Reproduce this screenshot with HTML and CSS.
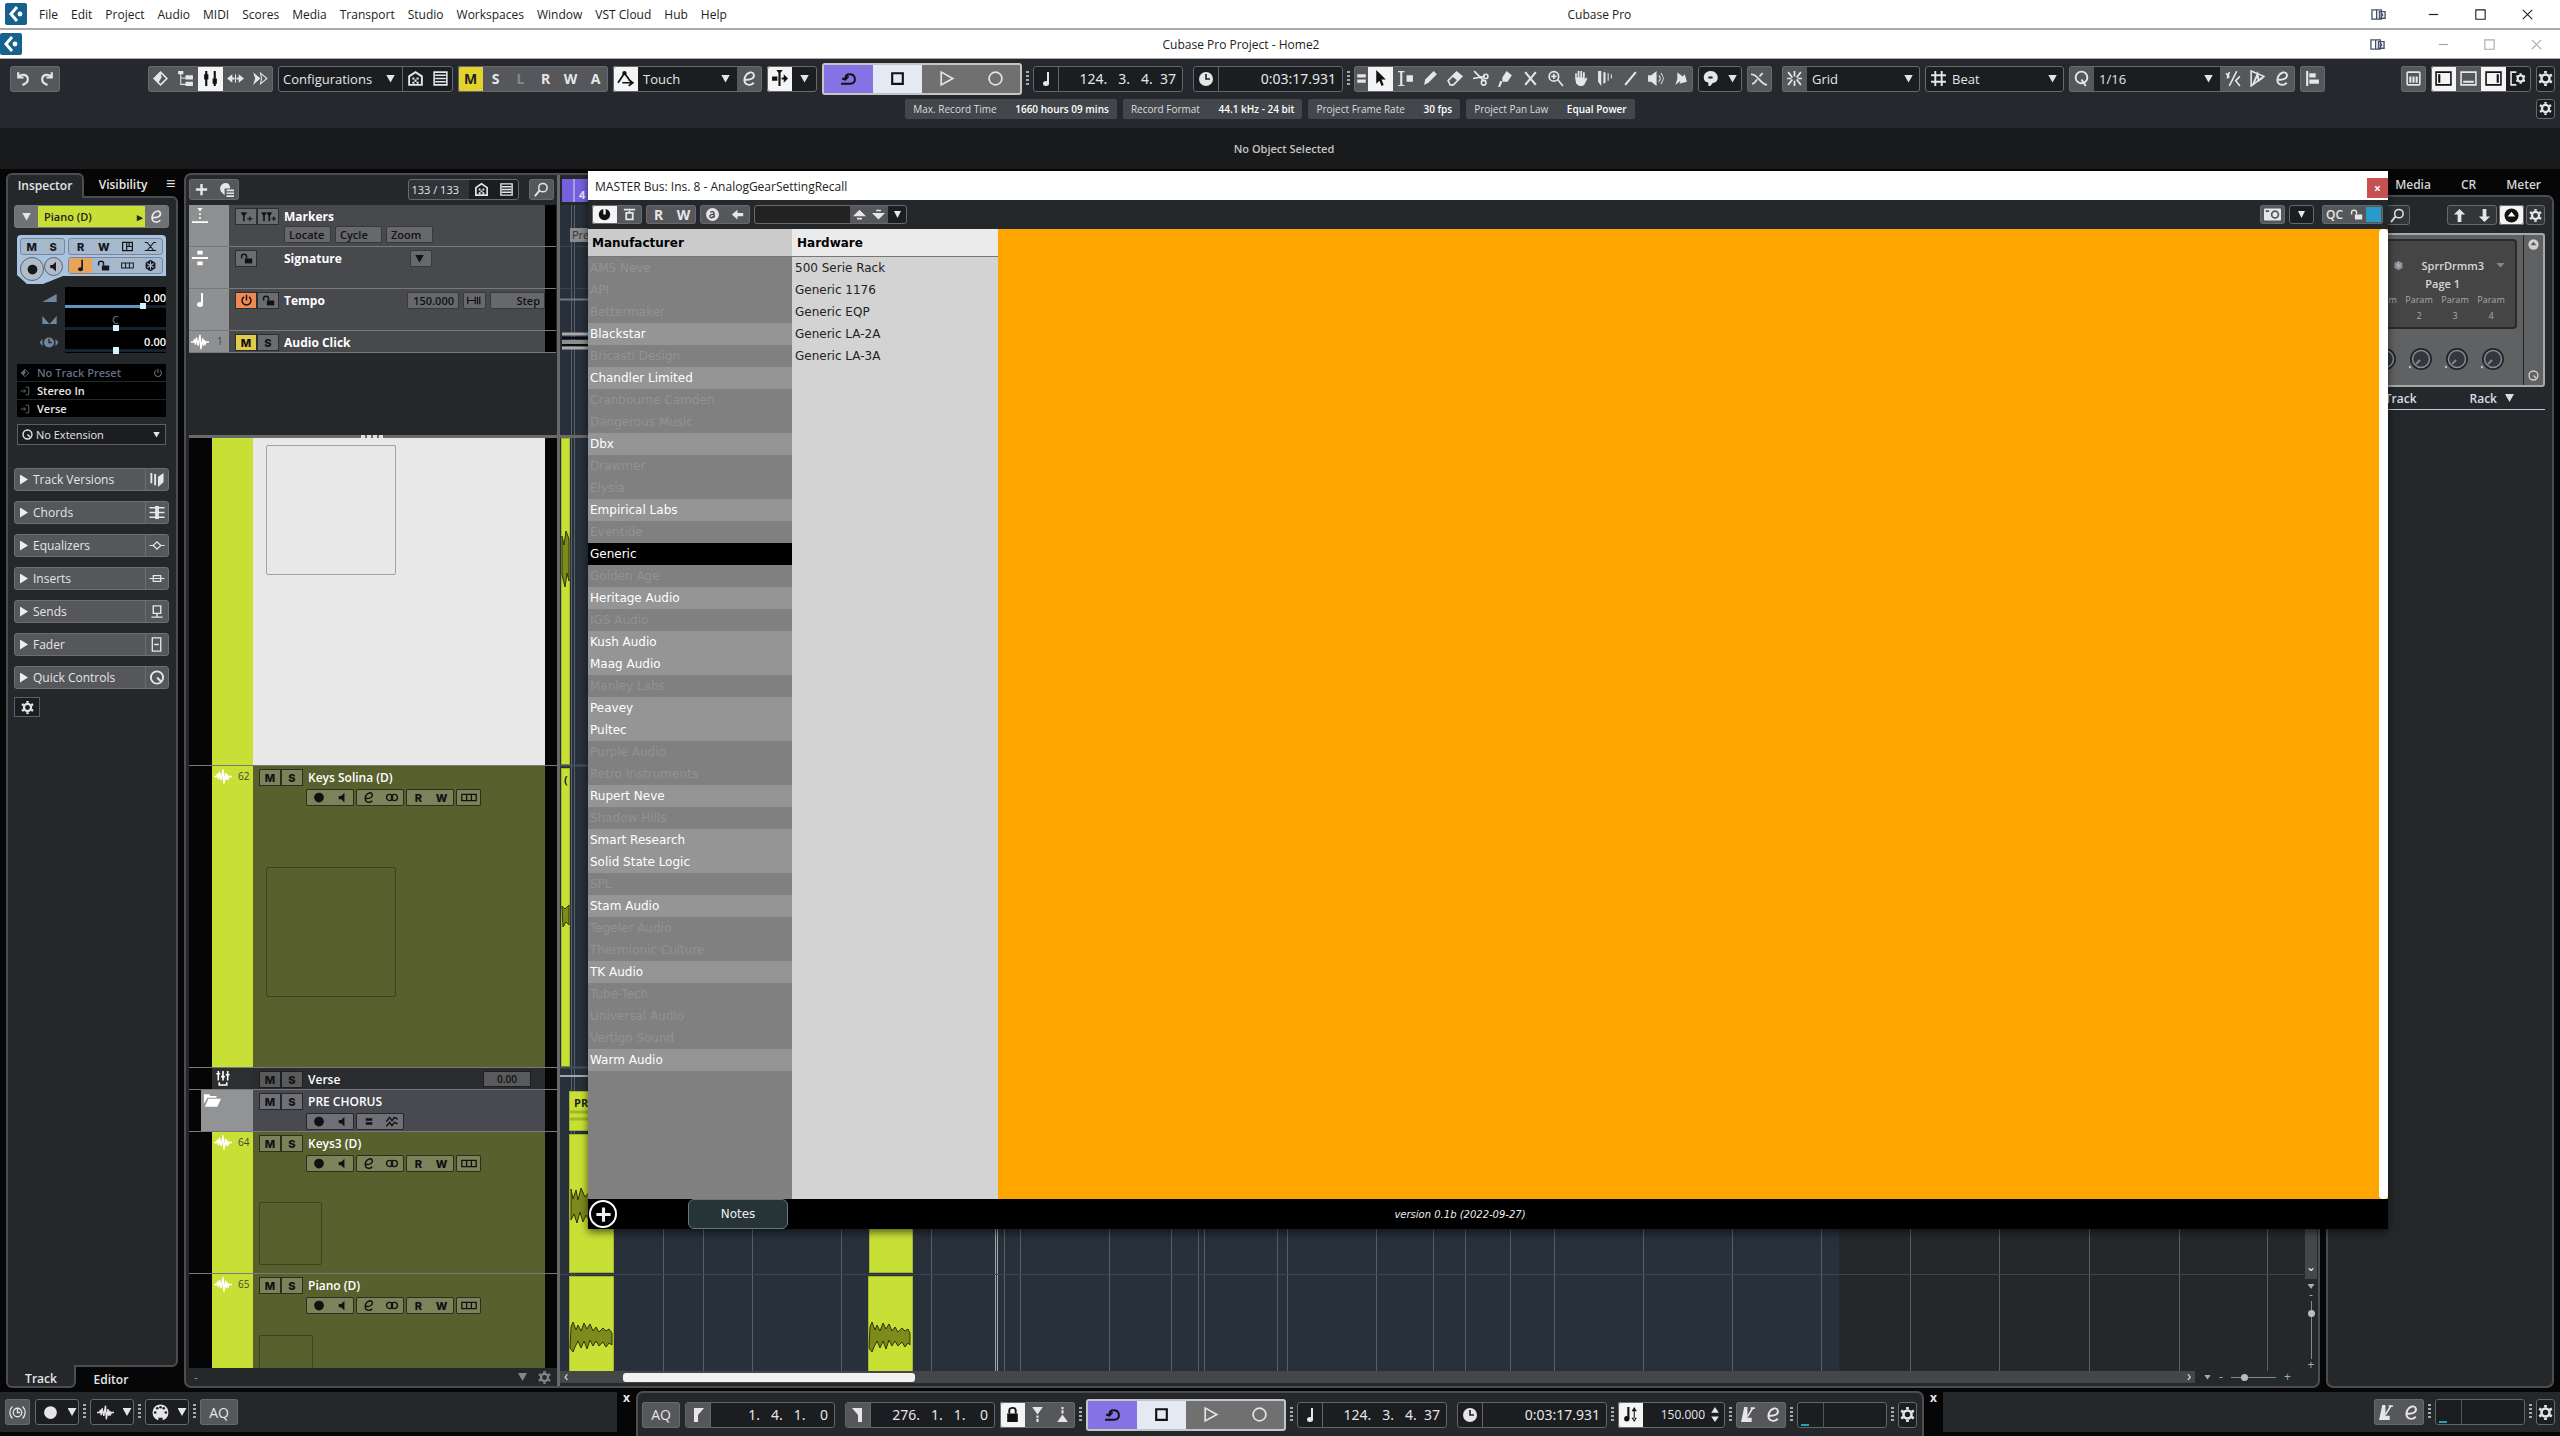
FILE: index.html
```html
<!DOCTYPE html>
<html lang="en">

<head>
    <meta charset="UTF-8">
    <meta name="viewport" content="width=device-width, initial-scale=1.0">
    <title>Cubase Pro Project - Home2</title>
    <link rel="stylesheet" href="styles.css">
</head>

<body>
    <!-- icon sprite -->
    <svg class="sprite" aria-hidden="true">
        <symbol id="logo" viewBox="0 0 22 22"><rect width="22" height="22" rx="2" fill="#17618f"/><path d="M12 4 6 11l6 7" fill="none" stroke="#fff" stroke-width="3"/><circle cx="15" cy="11" r="2.4" fill="#fff"/></symbol>
        <symbol id="undo" viewBox="0 0 16 16"><path d="M4 2v5h5M4 7c3-4 9-3 9 2 0 3-2 4-5 5" fill="none" stroke="currentColor" stroke-width="2"/></symbol>
        <symbol id="redo" viewBox="0 0 16 16"><path d="M12 2v5H7M12 7C9 3 3 4 3 9c0 3 2 4 5 5" fill="none" stroke="currentColor" stroke-width="2"/></symbol>
        <symbol id="diamond" viewBox="0 0 16 16"><path d="M8 2 14 8l-6 6-6-6z" fill="none" stroke="currentColor" stroke-width="1.5"/><path d="M8 2 2 8l4 4 3-5z" fill="currentColor"/></symbol>
        <symbol id="tree" viewBox="0 0 16 16"><path d="M1 1h5v3H1zM8 5h7v4H8zM8 11h7v4H8zM3 4h1v9h4v1H3zM4 7h4v1H4z" fill="currentColor"/></symbol>
        <symbol id="faders" viewBox="0 0 16 16"><path d="M3 1h2v3h1v5H5v6H3V9H2V4h1zM11 1h2v7h1v5h-1v2h-2v-2h-1V8h1z" fill="currentColor"/></symbol>
        <symbol id="lr" viewBox="0 0 16 16"><path d="M0 8l5-4v3h2v2H5v3zM16 8l-5-4v3H9v2h2v3zM7.500 4h1v8h-1z" fill="currentColor"/></symbol>
        <symbol id="ff" viewBox="0 0 16 16"><path d="M1 2l7 6-7 6 2-6z" fill="currentColor"/><path d="M8 3l6 5-6 5 1-5z" fill="none" stroke="currentColor"/></symbol>
        <symbol id="house" viewBox="0 0 16 16"><path d="M2 14V6l6-4 6 4v8z" fill="none" stroke="currentColor" stroke-width="1.800"/><path d="M5 7h2v2H5zM9 7h2v2H9zM7 9h2v2H7zM5 11h2v2H5zM9 11h2v2H9z" fill="currentColor"/></symbol>
        <symbol id="lines" viewBox="0 0 16 16"><path d="M2 2h12v12H2zM3 5h10M3 8h10M3 11h10" fill="none" stroke="currentColor" stroke-width="1.500"/></symbol>
        <symbol id="auto" viewBox="0 0 16 16"><path d="M1 12 7 3l6 8M5 12h9M11 9l4 3-4 3" fill="none" stroke="currentColor" stroke-width="1.600"/><circle cx="7" cy="3" r="2" fill="currentColor"/></symbol>
        <symbol id="edit" viewBox="0 0 16 16"><path d="M3 9c7 1 10-2 9-5-1-3-6-2-8 2-2 5 0 8 4 8 2 0 3-1 4-2" fill="none" stroke="currentColor" stroke-width="1.800"/></symbol>
        <symbol id="follow" viewBox="0 0 16 16"><path d="M1 6h5v4H1zM7 1h2v14H7zM5 0h6L8 4zM10 7h2V4l4 4-4 4V9h-2z" fill="currentColor"/></symbol>
        <symbol id="cycle" viewBox="0 0 16 16"><path d="M1 13h9c6-1 5-9-1-9-3 0-4 2-4 4M2 8l3 1 3-3" fill="none" stroke="currentColor" stroke-width="1.800"/></symbol>
        <symbol id="stop" viewBox="0 0 16 16"><path d="M3 3h10v10H3z" fill="none" stroke="currentColor" stroke-width="2"/></symbol>
        <symbol id="play" viewBox="0 0 16 16"><path d="M3 2v12l11-6z" fill="none" stroke="currentColor" stroke-width="1.500"/></symbol>
        <symbol id="rec" viewBox="0 0 16 16"><circle cx="8" cy="8" r="6" fill="none" stroke="currentColor" stroke-width="1.600"/></symbol>
        <symbol id="dot" viewBox="0 0 16 16"><circle cx="8" cy="8" r="6" fill="currentColor"/></symbol>
        <symbol id="note" viewBox="0 0 16 16"><path d="M9 1h2v11H9z" fill="currentColor"/><ellipse cx="8" cy="12.500" rx="3" ry="2.500" fill="currentColor"/></symbol>
        <symbol id="clock" viewBox="0 0 16 16"><circle cx="8" cy="8" r="7" fill="currentColor"/><path d="M8 3v5h4" fill="none" stroke="#1c1e21" stroke-width="1.600"/></symbol>
        <symbol id="bars" viewBox="0 0 16 16"><path d="M4 4h8v3H4zM4 9h8v3H4z" fill="currentColor"/></symbol>
        <symbol id="cursor" viewBox="0 0 16 16"><path d="M4 0v13l3-3 2 5 2-1-2-5h4z" fill="currentColor"/></symbol>
        <symbol id="range" viewBox="0 0 16 16"><path d="M1 1h6v1H5v12h2v1H1v-1h2V2H1zM9 5h6v6H9z" fill="currentColor"/></symbol>
        <symbol id="pencil" viewBox="0 0 16 16"><path d="M2 14l1-5 8-8 3 3-8 8z" fill="currentColor"/></symbol>
        <symbol id="eraser" viewBox="0 0 16 16"><path d="M1 10 9 2l5 4-8 8H3z" fill="none" stroke="currentColor" stroke-width="1.500"/><path d="M5 6l4-4 5 4-4 4z" fill="currentColor"/></symbol>
        <symbol id="cut" viewBox="0 0 16 16"><path d="M2 1l9 9M1 8l11-2" stroke="currentColor" stroke-width="1.600"/><circle cx="13" cy="6" r="2" fill="none" stroke="currentColor" stroke-width="1.500"/><circle cx="11" cy="12" r="2.200" fill="none" stroke="currentColor" stroke-width="1.500"/></symbol>
        <symbol id="glue" viewBox="0 0 16 16"><path d="M5 7 9 1l5 4-4 6H5zM3 10l2 1-2 5H1z" fill="currentColor"/></symbol>
        <symbol id="x" viewBox="0 0 16 16"><path d="M3 2l10 12M13 2 3 14" stroke="currentColor" stroke-width="2"/></symbol>
        <symbol id="zoomin" viewBox="0 0 16 16"><circle cx="6.500" cy="6" r="4.500" fill="none" stroke="currentColor" stroke-width="1.600"/><path d="M4 6h5M6.500 3.500v5M10 9l5 6" stroke="currentColor" stroke-width="1.600"/></symbol>
        <symbol id="search" viewBox="0 0 16 16"><circle cx="9.500" cy="6" r="4.500" fill="none" stroke="currentColor" stroke-width="1.600"/><path d="M6 9l-5 6" stroke="currentColor" stroke-width="2"/></symbol>
        <symbol id="hand" viewBox="0 0 16 16"><path d="M3 8V3h1.500v4h.8V1h1.700v6h.8V1h1.700v6h.8V2h1.700v7l1-2 1.500 1-3 6-2 1H7l-3-2z" fill="currentColor"/></symbol>
        <symbol id="warp" viewBox="0 0 16 16"><path d="M1 1h3v14L1 11zM6 2h2v10l-2 1zM10 3h1v7h-1zM13 4h1v4h-1z" fill="currentColor"/></symbol>
        <symbol id="line" viewBox="0 0 16 16"><path d="M3 14 13 2" stroke="currentColor" stroke-width="2"/></symbol>
        <symbol id="speaker" viewBox="0 0 16 16"><path d="M1 5h3l5-4v14l-5-4H1z" fill="currentColor"/><path d="M11 5c2 2 2 4 0 6M13 3c3 3 3 7 0 10" fill="none" stroke="currentColor"/></symbol>
        <symbol id="spk" viewBox="0 0 16 16"><path d="M4 6h3l4-4v12L7 10H4z" fill="currentColor"/></symbol>
        <symbol id="scrub" viewBox="0 0 16 16"><path d="M5 2l5 4 2-2 2 7-7 2 1-3-5 4 2-5z" fill="currentColor"/></symbol>
        <symbol id="palette" viewBox="0 0 16 16"><path d="M8 1a6 6 0 0 0-6 8c1 3 3 2 4 3v3c3 1 3-3 5-3 6-1 5-11-3-11zm2 7H6V6h4z" fill="currentColor" fill-rule="evenodd"/></symbol>
        <symbol id="xfade" viewBox="0 0 16 16"><path d="M0 4c7 0 8 9 15 10M1 13c3 0 3-3 5-4M11 3 8 6" fill="none" stroke="currentColor" stroke-width="1.600"/></symbol>
        <symbol id="snap" viewBox="0 0 16 16"><path d="M8 1v5M8 10v5M2 2l4 5M14 2l-4 5M2 14l4-5M14 14l-4-5M1 8h4M11 8h4" stroke="currentColor" stroke-width="1.600"/></symbol>
        <symbol id="hash" viewBox="0 0 16 16"><path d="M5 1v14M11 1v14M1 5h14M1 11h14" stroke="currentColor" stroke-width="1.800"/></symbol>
        <symbol id="q" viewBox="0 0 16 16"><circle cx="8" cy="7" r="5.500" fill="none" stroke="currentColor" stroke-width="1.800"/><path d="M8 9l4 6" stroke="currentColor" stroke-width="1.800"/></symbol>
        <symbol id="iter" viewBox="0 0 16 16"><path d="M2 3l3 4M5 2 3 8M12 1 5 15M15 6l-4 4 4 5" fill="none" stroke="currentColor" stroke-width="1.500"/></symbol>
        <symbol id="warpq" viewBox="0 0 16 16"><path d="M2 1l12 5-12 9z" fill="none" stroke="currentColor" stroke-width="1.500"/><path d="M4 13 8 4l1 6 4-3" fill="none" stroke="currentColor" stroke-width="1.800"/></symbol>
        <symbol id="align" viewBox="0 0 16 16"><path d="M2 1h2v14H2zM5 3h6v4H5zM5 9h9v4H5z" fill="currentColor"/></symbol>
        <symbol id="keys" viewBox="0 0 16 16"><rect x="2" y="2" width="12" height="12" rx="1" fill="none" stroke="currentColor" stroke-width="1.500"/><path d="M4 6h2v6H4zM7 6h2v6H7zM10 6h2v6h-2z" fill="currentColor"/></symbol>
        <symbol id="paneL" viewBox="0 0 16 16"><path d="M1 2h14v12H1z" fill="none" stroke="currentColor" stroke-width="1.500"/><path d="M3 4h2v8H3z" fill="currentColor"/></symbol>
        <symbol id="paneB" viewBox="0 0 16 16"><path d="M1 2h14v12H1z" fill="none" stroke="currentColor" stroke-width="1.500"/><path d="M3 10h10v2H3z" fill="currentColor"/></symbol>
        <symbol id="paneR" viewBox="0 0 16 16"><path d="M1 2h14v12H1z" fill="none" stroke="currentColor" stroke-width="1.500"/><path d="M11 4h2v8h-2z" fill="currentColor"/></symbol>
        <symbol id="layout" viewBox="0 0 16 16"><path d="M6 2H1v12h5" fill="none" stroke="currentColor" stroke-width="1.500"/><circle cx="10" cy="8" r="2.800" fill="none" stroke="currentColor" stroke-width="2"/><path d="M10 3v2M10 11v2M6 5.500l2 1M12 9.500l2 1M6 10.500l2-1M12 6.500l2-1" stroke="currentColor" stroke-width="2"/></symbol>
        <symbol id="gear" viewBox="0 0 16 16"><circle cx="8" cy="8" r="3.800" fill="none" stroke="currentColor" stroke-width="2.400"/><path d="M8 1v2M8 13v2M2 4.500l2 1M12 10.500l2 1M2 11.500l2-1M12 5.500l2-1" stroke="currentColor" stroke-width="2.600"/></symbol>
        <symbol id="panel" viewBox="0 0 16 16"><path d="M1 3h10v10H1zM6 3v10M9 5h6v7H9z" fill="none" stroke="#46506b" stroke-width="1.400"/><path d="M11 7h2v3h-2z" fill="#46506b"/></symbol>
        <symbol id="min" viewBox="0 0 16 16"><path d="M3 8h10" stroke="currentColor" stroke-width="1.300"/></symbol>
        <symbol id="max" viewBox="0 0 16 16"><path d="M3 3h10v10H3z" fill="none" stroke="currentColor" stroke-width="1.200"/></symbol>
        <symbol id="close" viewBox="0 0 16 16"><path d="M3 3l10 10M13 3 3 13" stroke="currentColor" stroke-width="1.200"/></symbol>
        <symbol id="plus" viewBox="0 0 16 16"><path d="M8 2v12M2 8h12" stroke="currentColor" stroke-width="2.600"/></symbol>
        <symbol id="preset" viewBox="0 0 16 16"><path d="M7 1a6 6 0 0 0-5 9l4 4V7h6C12 3 10 1 7 1z" fill="currentColor"/><path d="M8 9h8M8 12h8M8 15h8" stroke="currentColor" stroke-width="1.800"/></symbol>
        <symbol id="wave" viewBox="0 0 20 16"><path d="M0 8h3l1-3 1 6 1-8 2 9L10 0l1 16 2-12 1 8 1-6 1 4 1-2h3" fill="none" stroke="currentColor" stroke-width="1.600"/></symbol>
        <symbol id="lock" viewBox="0 0 16 16"><path d="M3 7h10v8H3z" fill="currentColor"/><path d="M5 7V4c0-3 6-3 6 0v3" fill="none" stroke="currentColor" stroke-width="1.800"/></symbol>
        <symbol id="unlock" viewBox="0 0 16 16"><path d="M6 8h9v6H6z" fill="currentColor"/><path d="M2 8V5c0-3 6-3 6 0v3" fill="none" stroke="currentColor" stroke-width="1.800"/></symbol>
        <symbol id="lanes" viewBox="0 0 20 16"><path d="M1 4h18v8H1zM7 4v8M13 4v8" fill="none" stroke="currentColor" stroke-width="1.600"/></symbol>
        <symbol id="ramp" viewBox="0 0 20 16"><path d="M1 3v10M1 8h10M11 3v10M14 3v10M17 3v10" fill="none" stroke="currentColor" stroke-width="1.600"/></symbol>
        <symbol id="inserts" viewBox="0 0 16 16"><path d="M2 3h12v10H2zM7 3v10M7 8h7M10 3v5" fill="none" stroke="currentColor" stroke-width="1.500"/></symbol>
        <symbol id="xx" viewBox="0 0 16 16"><path d="M1 3h3l8 10h3M15 3h-3L4 13H1M1 13h14" fill="none" stroke="currentColor" stroke-width="1.300"/></symbol>
        <symbol id="snow" viewBox="0 0 16 16"><path d="M8 1l6 3.500v7L8 15l-6-3.500v-7z" fill="currentColor"/><path d="M8 3v10M4 5.500l8 5M12 5.500l-8 5" stroke="#a5bdd8" stroke-width="1.300"/></symbol>
        <symbol id="link" viewBox="0 0 20 16"><circle cx="7" cy="8" r="3.800" fill="none" stroke="currentColor" stroke-width="1.600"/><circle cx="13" cy="8" r="3.800" fill="none" stroke="currentColor" stroke-width="1.600"/></symbol>
        <symbol id="power" viewBox="0 0 16 16"><path d="M5 3.500a5.500 5.500 0 1 0 6 0M8 1v7" fill="none" stroke="currentColor" stroke-width="1.800"/></symbol>
        <symbol id="powerOn" viewBox="0 0 16 16"><circle cx="8" cy="8" r="7" fill="#111"/><path d="M8 0v8" stroke="#f4f4f4" stroke-width="3"/></symbol>
        <symbol id="bypass" viewBox="0 0 16 16"><path d="M1 1h14v2H1z" fill="currentColor"/><path d="M4 6h8v8H4zM8 3v3" fill="none" stroke="currentColor" stroke-width="2.200"/></symbol>
        <symbol id="folder" viewBox="0 0 20 16"><path d="M1 1h6l1 2h7v2H5L1 12zM6 6h14l-4 9H2z" fill="currentColor"/></symbol>
        <symbol id="mixer" viewBox="0 0 16 16"><path d="M3 0v10M8 0v10M13 0v10M1 3h4M6 6h4M11 4h4M4 12v3h8v-3" fill="none" stroke="currentColor" stroke-width="1.700"/></symbol>
        <symbol id="sig" viewBox="0 0 20 16"><path d="M7 0h6v4H7zM1 7h18v2H1zM7 12h6v4H7z" fill="currentColor"/></symbol>
        <symbol id="marker" viewBox="0 0 20 18"><path d="M7 0h6l-3 4zM9 6h2v2H9zM9 10h2v2H9zM1 15h18v2H1z" fill="currentColor"/></symbol>
        <symbol id="addm" viewBox="0 0 20 16"><path d="M3 3h7L7 7v7H6V7z" fill="currentColor" stroke="currentColor"/><path d="M11 11h7M14.500 8v6" stroke="currentColor" stroke-width="1.500"/></symbol>
        <symbol id="addc" viewBox="0 0 20 16"><path d="M1 3h6L4.500 7v7h-1V7zM8 3h6l-2.500 4v7h-1V7z" fill="currentColor" stroke="currentColor"/><path d="M14 11h6M17 8v6" stroke="currentColor" stroke-width="1.500"/></symbol>
        <symbol id="left" viewBox="0 0 16 16"><path d="M1 8l7-6v4h7v4H8v4z" fill="currentColor"/></symbol>
        <symbol id="up" viewBox="0 0 16 16"><path d="M8 1l6 6h-4v8H6V7H2z" fill="currentColor"/></symbol>
        <symbol id="down" viewBox="0 0 16 16"><path d="M8 15l6-6h-4V1H6v8H2z" fill="currentColor"/></symbol>
        <symbol id="stepUp" viewBox="0 0 16 16"><path d="M8 2l8 8H0zM5 12h6v2H5z" fill="currentColor"/></symbol>
        <symbol id="stepDown" viewBox="0 0 16 16"><path d="M8 14 0 6h16zM5 2h6v2H5z" fill="currentColor"/></symbol>
        <symbol id="camera" viewBox="0 0 20 14"><rect width="20" height="14" rx="1" fill="currentColor"/><circle cx="13" cy="7" r="4" fill="none" stroke="#555" stroke-width="2"/><path d="M2 3h4" stroke="#555" stroke-width="2"/></symbol>
        <symbol id="din" viewBox="0 0 16 16"><circle cx="8" cy="8" r="7.500" fill="currentColor"/><g fill="#1c1e21"><circle cx="3" cy="8" r="1.200"/><circle cx="5" cy="4" r="1.200"/><circle cx="8" cy="3" r="1.200"/><circle cx="11" cy="4" r="1.200"/><circle cx="13" cy="8" r="1.200"/><path d="M6 13h4v3H6z"/></g></symbol>
        <symbol id="tclock" viewBox="0 0 20 16"><circle cx="10" cy="8" r="5" fill="none" stroke="currentColor" stroke-width="1.500"/><path d="M10 4v4h3M4 1c-4 4-4 10 0 14M16 1c4 4 4 10 0 14" fill="none" stroke="currentColor" stroke-width="1.500"/></symbol>
        <symbol id="dclock" viewBox="0 0 20 14"><circle cx="10" cy="7" r="5.500" fill="currentColor"/><path d="M10 3v4h3" fill="none" stroke="#25282b" stroke-width="1.500"/><path d="M3 3v8L0 7zM17 3v8l3-4z" fill="currentColor"/></symbol>
        <symbol id="locL" viewBox="0 0 16 16"><path d="M4 1h10L8 8v7H4z" fill="currentColor"/></symbol>
        <symbol id="locR" viewBox="0 0 16 16"><path d="M12 1H2l6 7v7h4z" fill="currentColor"/></symbol>
        <symbol id="pin" viewBox="0 0 16 16"><path d="M3 1h10L8 8zM7 9h2v2H7zM7 12h2v3H7z" fill="currentColor"/></symbol>
        <symbol id="pout" viewBox="0 0 16 16"><path d="M7 1h2v2H7zM7 4h2v3H7zM3 15h10L8 8z" fill="currentColor"/></symbol>
        <symbol id="click" viewBox="0 0 16 16"><path d="M4 1h3v10h4v4H1z" fill="currentColor"/><path d="M7 10l5-8M10 2h4" stroke="currentColor" stroke-width="1.600"/></symbol>
        <symbol id="tempo" viewBox="0 0 16 16"><path d="M5 1h2v11H5zM11 3h1v10h-1zM9 5l2.500-4L14 5zM9 11l2.500 4 2.500-4z" fill="currentColor"/><circle cx="4.500" cy="12" r="2.500" fill="currentColor"/></symbol>
        <symbol id="updown" viewBox="0 0 10 16"><path d="M5 0l4 6H1zM5 16l4-6H1z" fill="currentColor"/></symbol>
        <symbol id="versions" viewBox="0 0 16 16"><path d="M1 1h2v11H1zM5 2h2v12H5zM9 5l6-4v10l-6 5z" fill="currentColor"/></symbol>
        <symbol id="chords" viewBox="0 0 16 16"><path d="M0 3h16M0 8h16M0 13h16" stroke="currentColor" stroke-width="1.500"/><path d="M6 1h4v14H6z" fill="currentColor"/></symbol>
        <symbol id="eq" viewBox="0 0 16 16"><path d="M0 8h4l4-4 4 4-4 4-4-4M12 8h4" fill="none" stroke="currentColor" stroke-width="1.300"/></symbol>
        <symbol id="ins" viewBox="0 0 16 16"><path d="M0 8h16M4 5h8v6H4z" fill="none" stroke="currentColor" stroke-width="1.300"/></symbol>
        <symbol id="send" viewBox="0 0 16 16"><path d="M4 2h8v8H4zM8 10v4M2 14h12" fill="none" stroke="currentColor" stroke-width="1.500"/></symbol>
        <symbol id="fader" viewBox="0 0 16 16"><path d="M3 1h9v14H3zM5 8h5" fill="none" stroke="currentColor" stroke-width="1.400"/></symbol>
        <symbol id="quick" viewBox="0 0 16 16"><circle cx="8" cy="8" r="6.500" fill="none" stroke="currentColor" stroke-width="2"/><path d="M8 8l4 4" stroke="currentColor" stroke-width="2"/></symbol>
        <symbol id="io" viewBox="0 0 16 16"><path d="M1 8h8M6 5l3 3-3 3M9 2h5v12H9" fill="none" stroke="currentColor" stroke-width="1.500"/></symbol>
        <symbol id="freeze" viewBox="0 0 16 16"><path d="M1 8l4-5 3 4 3-4 4 2M1 14l4-5 3 4 3-4 4 2" fill="none" stroke="currentColor" stroke-width="1.700"/></symbol>
        <symbol id="a" viewBox="0 0 16 16"><circle cx="8" cy="8" r="8" fill="currentColor"/><path d="M5 5c3-1 5-1 5 2v5M10 8c-7-1-6 4-3 4l3-2" fill="none" stroke="#444" stroke-width="1.600"/></symbol>
        <symbol id="eject" viewBox="0 0 16 16"><circle cx="8" cy="8" r="7.500" fill="currentColor"/><path d="M8 4l4 5H4z" fill="var(--hole, #fff)"/></symbol>
        <symbol id="knob" viewBox="0 0 26 26"><circle cx="13" cy="13" r="11" fill="#222429"/><circle cx="13" cy="13" r="8.500" fill="#34373d" stroke="#888b90" stroke-width="1.500"/><path d="M8 18l4-4" stroke="#888" stroke-width="2"/><circle cx="2" cy="21" r="1.200" fill="#bbb"/></symbol>
        <symbol id="vol" viewBox="0 0 16 10"><path d="M0 9 16 0v9z" fill="currentColor"/></symbol>
        <symbol id="pan" viewBox="0 0 16 10"><path d="M0 0l8 9H0zM16 0 8 9h8z" fill="currentColor"/></symbol>
    </svg>

    <header class="menubar">
        <svg class="logo"><use href="#logo"/></svg>
        <nav class="menu">
            <a href="#">File</a><a href="#">Edit</a><a href="#">Project</a><a href="#">Audio</a><a href="#">MIDI</a><a href="#">Scores</a><a href="#">Media</a><a href="#">Transport</a><a href="#">Studio</a><a href="#">Workspaces</a><a href="#">Window</a><a href="#">VST Cloud</a><a href="#">Hub</a><a href="#">Help</a>
        </nav>
        <span class="app-title">Cubase Pro</span>
        <div class="win-buttons">
            <button aria-label="Panel"><svg><use href="#panel"/></svg></button>
            <button aria-label="Minimize"><svg><use href="#min"/></svg></button>
            <button aria-label="Maximize"><svg><use href="#max"/></svg></button>
            <button aria-label="Close"><svg><use href="#close"/></svg></button>
        </div>
    </header>

    <div class="titlebar">
        <svg class="logo"><use href="#logo"/></svg>
        <span class="doc-title">Cubase Pro Project - Home2</span>
        <div class="win-buttons inactive">
            <button aria-label="Panel"><svg><use href="#panel"/></svg></button>
            <button aria-label="Minimize"><svg><use href="#min"/></svg></button>
            <button aria-label="Maximize"><svg><use href="#max"/></svg></button>
            <button aria-label="Close"><svg><use href="#close"/></svg></button>
        </div>
    </div>

    <div class="toolbar">
        <div class="group"><button aria-label="Undo"><svg><use href="#undo"/></svg></button><button aria-label="Redo"><svg><use href="#redo"/></svg></button></div>
        <div class="group gap-config">
            <button aria-label="Constrain"><svg><use href="#diamond"/></svg></button><button aria-label="Visibility"><svg><use href="#tree"/></svg></button><button class="on" aria-label="Mixer"><svg><use href="#faders"/></svg></button><button aria-label="Nudge"><svg><use href="#lr"/></svg></button><button aria-label="Forward"><svg><use href="#ff"/></svg></button>
        </div>
        <div class="group dark">
            <label class="drop w-config"><select aria-label="Configurations"><option>Configurations</option></select></label>
            <button aria-label="Agents"><svg><use href="#house"/></svg></button><button aria-label="List"><svg><use href="#lines"/></svg></button>
        </div>
        <div class="group letters"><button class="mute">M</button><button>S</button><button class="dim">L</button><button>R</button><button>W</button><button>A</button></div>
        <div class="group">
            <button class="on" aria-label="Automation"><svg><use href="#auto"/></svg></button>
            <label class="drop w-touch"><select aria-label="Automation mode"><option>Touch</option></select></label>
            <button aria-label="Automation panel"><svg><use href="#edit"/></svg></button>
        </div>
        <div class="group dark"><button class="on" aria-label="Auto-scroll"><svg><use href="#follow"/></svg></button><button class="arrow" aria-label="Auto-scroll options"></button></div>
        <div class="transport">
            <button class="cyc" aria-label="Cycle"><svg><use href="#cycle"/></svg></button><button class="stp" aria-label="Stop"><svg><use href="#stop"/></svg></button><button aria-label="Play"><svg><use href="#play"/></svg></button><button aria-label="Record"><svg><use href="#rec"/></svg></button>
        </div>
        <i class="grip"></i>
        <label class="readout"><svg><use href="#note"/></svg><input type="text" aria-label="Bars and beats" value="124.   3.   4.  37"></label>
        <label class="readout gap-s"><svg><use href="#clock"/></svg><input type="text" aria-label="Time" value="0:03:17.931"></label>
        <i class="grip"></i>
        <div class="group tools">
            <button class="slim" aria-label="Tools"><svg><use href="#bars"/></svg></button><button class="on" aria-label="Select"><svg><use href="#cursor"/></svg></button><button aria-label="Range"><svg><use href="#range"/></svg></button><button aria-label="Draw"><svg><use href="#pencil"/></svg></button><button aria-label="Erase"><svg><use href="#eraser"/></svg></button><button aria-label="Split"><svg><use href="#cut"/></svg></button><button aria-label="Glue"><svg><use href="#glue"/></svg></button><button aria-label="Mute"><svg><use href="#x"/></svg></button><button aria-label="Zoom"><svg><use href="#zoomin"/></svg></button><button aria-label="Comp"><svg><use href="#hand"/></svg></button><button aria-label="Time Warp"><svg><use href="#warp"/></svg></button><button aria-label="Line"><svg><use href="#line"/></svg></button><button aria-label="Play"><svg><use href="#speaker"/></svg></button><button aria-label="Color"><svg><use href="#scrub"/></svg></button>
        </div>
        <div class="group dark"><button aria-label="Palette"><svg><use href="#palette"/></svg></button><button class="arrow cog" aria-label="Palette options"></button></div>
        <div class="group"><button aria-label="Snap zero"><svg><use href="#xfade"/></svg></button></div>
        <div class="group gap-s">
            <button aria-label="Snap"><svg><use href="#snap"/></svg></button>
            <label class="drop w-grid"><select aria-label="Snap type"><option>Grid</option></select></label>
        </div>
        <div class="group dark">
            <svg class="lead"><use href="#hash"/></svg>
            <label class="drop w-grid"><select aria-label="Grid type"><option>Beat</option></select></label>
        </div>
        <div class="group">
            <button aria-label="Quantize"><svg><use href="#q"/></svg></button>
            <label class="drop w-quant"><select aria-label="Quantize preset"><option>1/16</option></select></label>
            <button aria-label="Iterative"><svg><use href="#iter"/></svg></button><button aria-label="AudioWarp"><svg><use href="#warpq"/></svg></button><button aria-label="Quantize panel"><svg><use href="#edit"/></svg></button>
        </div>
        <div class="group"><button aria-label="Align"><svg><use href="#align"/></svg></button></div>
        <div class="group push"><button aria-label="Keyboard"><svg><use href="#keys"/></svg></button></div>
        <div class="group dark"><button class="on" aria-label="Left zone"><svg><use href="#paneL"/></svg></button><button class="grey" aria-label="Lower zone"><svg><use href="#paneB"/></svg></button><button class="on" aria-label="Right zone"><svg><use href="#paneR"/></svg></button><button aria-label="Window layout"><svg><use href="#layout"/></svg></button></div>
        <div class="group dark"><button class="cog" aria-label="Toolbar setup"><svg><use href="#gear"/></svg></button></div>
    </div>

    <div class="infobar">
        <span class="chip">Max. Record Time <b>1660 hours 09 mins</b></span>
        <span class="chip">Record Format <b>44.1 kHz - 24 bit</b></span>
        <span class="chip">Project Frame Rate <b>30 fps</b></span>
        <span class="chip">Project Pan Law <b>Equal Power</b></span>
        <div class="group dark"><button class="cog" aria-label="Status line setup"><svg><use href="#gear"/></svg></button></div>
    </div>
    <div class="statusline">No Object Selected</div>

    <main class="workspace">
        <aside class="inspector">
            <div class="tabs"><button class="tab active">Inspector</button><button class="tab">Visibility</button><button class="burger" aria-label="Inspector menu">≡</button></div>
            <div class="insp-body">
                <div class="trackname"><button class="fold" aria-label="Fold"></button><span>Piano (D)</span><button aria-label="Edit channel"><svg><use href="#edit"/></svg></button></div>
                <div class="modeblock">
                    <div class="leftkeys"><div class="ms"><button>M</button><button>S</button></div><div class="rm"><button class="big" aria-label="Record enable"><svg><use href="#dot"/></svg></button><button class="small" aria-label="Monitor"><svg><use href="#spk"/></svg></button></div></div>
                    <div class="rightkeys">
                        <div><button>R</button><button>W</button><button aria-label="Channel"><svg><use href="#inserts"/></svg></button><button aria-label="Auto fades"><svg><use href="#xx"/></svg></button></div>
                        <div><button class="amber" aria-label="Musical mode"><svg><use href="#note"/></svg></button><button aria-label="Lock"><svg><use href="#unlock"/></svg></button><button aria-label="Lanes"><svg><use href="#lanes"/></svg></button><button aria-label="Freeze"><svg><use href="#snow"/></svg></button></div>
                    </div>
                </div>
                <div class="values">
                    <svg><use href="#vol"/></svg>
                    <label><output>0.00</output><input type="range" class="filled" aria-label="Volume" value="79"></label>
                    <svg><use href="#pan"/></svg>
                    <label><output class="mid">C</output><input type="range" aria-label="Pan" value="50"></label>
                    <svg class="wide"><use href="#dclock"/></svg>
                    <label><output>0.00</output><input type="range" aria-label="Delay" value="50"></label>
                </div>
                <ul class="routing">
                    <li class="none"><svg><use href="#diamond"/></svg><span>No Track Preset</span><svg><use href="#power"/></svg></li>
                    <li><svg><use href="#io"/></svg><span>Stereo In</span></li>
                    <li><svg><use href="#io"/></svg><span>Verse</span></li>
                </ul>
                <div class="extension"><svg><use href="#quick"/></svg><label class="drop"><select aria-label="Extension"><option>No Extension</option></select></label></div>
                <div class="sections">
                    <button>Track Versions<svg><use href="#versions"/></svg></button>
                    <button>Chords<svg><use href="#chords"/></svg></button>
                    <button>Equalizers<svg><use href="#eq"/></svg></button>
                    <button>Inserts<svg><use href="#ins"/></svg></button>
                    <button>Sends<svg><use href="#send"/></svg></button>
                    <button>Fader<svg><use href="#fader"/></svg></button>
                    <button>Quick Controls<svg><use href="#quick"/></svg></button>
                </div>
                <button class="setup" aria-label="Inspector setup"><svg><use href="#gear"/></svg></button>
            </div>
            <div class="tabs bottom"><button class="tab active">Track</button><button class="tab">Editor</button></div>
        </aside>

        <section class="project">
            <div class="tracklist">
                <div class="list-tools">
                    <div class="group small"><button aria-label="Add track"><svg><use href="#plus"/></svg></button><button aria-label="Track preset"><svg><use href="#preset"/></svg></button></div>
                    <div class="group small count"><span>133 / 133</span><button aria-label="Agents"><svg><use href="#house"/></svg></button><button aria-label="List"><svg><use href="#lines"/></svg></button></div>
                    <div class="group small"><button aria-label="Find track"><svg><use href="#search"/></svg></button></div>
                </div>
                <div class="pinned">
                    <div class="ptrack row-a">
                        <div class="pside"><svg><use href="#marker"/></svg></div>
                        <div class="pbody"><div class="keys"><button aria-label="Add marker"><svg><use href="#addm"/></svg></button><button aria-label="Add cycle marker"><svg><use href="#addc"/></svg></button></div>
                            <div><b>Markers</b><div class="mbtns"><button>Locate</button><button>Cycle</button><button>Zoom</button></div></div></div>
                    </div>
                    <div class="ptrack row-a">
                        <div class="pside"><svg><use href="#sig"/></svg></div>
                        <div class="pbody"><div class="keys"><button aria-label="Lock"><svg><use href="#unlock"/></svg></button><i></i></div><b class="wide">Signature</b><button class="arrow dk" aria-label="Signature menu"></button></div>
                    </div>
                    <div class="ptrack row-a">
                        <div class="pside"><svg><use href="#note"/></svg></div>
                        <div class="pbody"><div class="keys"><button class="orange" aria-label="Activate tempo"><svg><use href="#power"/></svg></button><button aria-label="Lock"><svg><use href="#unlock"/></svg></button></div><b class="wide">Tempo</b><div class="mbtns"><button class="num">150.000</button><button class="ic" aria-label="Tempo curve"><svg><use href="#ramp"/></svg></button><button class="step">Step</button></div></div>
                    </div>
                    <div class="ptrack row-b">
                        <div class="pside"><svg><use href="#wave"/></svg><small>1</small></div>
                        <div class="pbody"><div class="keys"><button class="yellow">M</button><button>S</button></div><b>Audio Click</b></div>
                    </div>
                </div>
                <div class="splitter"></div>
                <div class="track selected h1"><div class="colour"></div><div class="tbody"><div class="pic"></div></div></div>
                <div class="track h2">
                    <div class="colour"><svg><use href="#wave"/></svg><small>62</small></div>
                    <div class="tbody">
                        <div class="thead"><div class="keys"><button>M</button><button>S</button></div><b>Keys Solina (D)</b></div>
                        <div class="tctl"><span><button aria-label="Record"><svg><use href="#dot"/></svg></button><button aria-label="Monitor"><svg><use href="#spk"/></svg></button></span><span><button aria-label="Edit"><svg><use href="#edit"/></svg></button><button aria-label="Stereo"><svg><use href="#link"/></svg></button></span><span><button>R</button><button>W</button></span><span><button aria-label="Lanes"><svg><use href="#lanes"/></svg></button></span></div>
                        <div class="pic low"></div>
                    </div>
                </div>
                <div class="track bus">
                    <div class="colour"><svg><use href="#mixer"/></svg></div>
                    <div class="tbody"><div class="thead"><div class="keys"><button>M</button><button>S</button></div><b>Verse</b><button class="gain">0.00</button></div></div>
                </div>
                <div class="track folder">
                    <div class="colour"><svg><use href="#folder"/></svg></div>
                    <div class="tbody">
                        <div class="thead"><div class="keys"><button>M</button><button>S</button></div><b>PRE CHORUS</b></div>
                        <div class="tctl"><span><button aria-label="Record"><svg><use href="#dot"/></svg></button><button aria-label="Monitor"><svg><use href="#spk"/></svg></button></span><span><button aria-label="Group editing"><svg><use href="#bars"/></svg></button><button aria-label="Phase"><svg><use href="#freeze"/></svg></button></span></div>
                    </div>
                </div>
                <div class="track h3">
                    <div class="colour"><svg><use href="#wave"/></svg><small>64</small></div>
                    <div class="tbody">
                        <div class="thead"><div class="keys"><button>M</button><button>S</button></div><b>Keys3 (D)</b></div>
                        <div class="tctl"><span><button aria-label="Record"><svg><use href="#dot"/></svg></button><button aria-label="Monitor"><svg><use href="#spk"/></svg></button></span><span><button aria-label="Edit"><svg><use href="#edit"/></svg></button><button aria-label="Stereo"><svg><use href="#link"/></svg></button></span><span><button>R</button><button>W</button></span><span><button aria-label="Lanes"><svg><use href="#lanes"/></svg></button></span></div>
                        <div class="pic mini"></div>
                    </div>
                </div>
                <div class="track last">
                    <div class="colour"><svg><use href="#wave"/></svg><small>65</small></div>
                    <div class="tbody">
                        <div class="thead"><div class="keys"><button>M</button><button>S</button></div><b>Piano (D)</b></div>
                        <div class="tctl"><span><button aria-label="Record"><svg><use href="#dot"/></svg></button><button aria-label="Monitor"><svg><use href="#spk"/></svg></button></span><span><button aria-label="Edit"><svg><use href="#edit"/></svg></button><button aria-label="Stereo"><svg><use href="#link"/></svg></button></span><span><button>R</button><button>W</button></span><span><button aria-label="Lanes"><svg><use href="#lanes"/></svg></button></span></div>
                        <div class="pic cut"></div>
                    </div>
                </div>
                <div class="list-foot"><span>-</span><i class="tri"></i><svg><use href="#gear"/></svg></div>
            </div>

            <div class="arrange">
                <svg class="canvas">
                    <rect width="100%" height="100%" fill="#25282b"/>
                    <rect y="30" width="1279" height="100%" fill="#28303b"/>
                    <rect x="2" y="4" width="1740" height="23" fill="#7560e0"/>
                    <path d="M14 4v23" stroke="#ddd"/>
                    <text x="19" y="24" class="ruler">4</text>
                    <g stroke="#56606a">
                        <path d="M11.500 30v1170M14.500 30v1170M103.500 260v940M143.500 260v940M192.500 260v940M281.500 260v940M371.500 260v940M444.500 260v940M460.500 260v940M549.500 260v940M611.500 260v940M638.500 260v940M644.500 260v940M717.500 260v940M727.500 260v940M816.500 260v940M873.500 260v940M905.500 260v940M950.500 260v940M994.500 260v940M1083.500 260v940M1172.500 260v940M1261.500 260v940M1350.500 260v940M1439.500 260v940M1529.500 260v940M1619.500 260v940M1707.500 260v940"/>
                    </g>
                    <path d="M435.500 260v940M437.500 260v940" stroke="#a5a8ab"/>
                    <path d="M0 71.500h1744M0 113.500h1744M0 1099.500h1744" stroke="#3c444e"/>
                    <path d="M0 124.500h1744" stroke="#73787e" stroke-width="2"/>
                    <rect x="10" y="53" width="90" height="14" fill="#8a8a8a"/>
                    <text x="12" y="64" class="tag">Pre</text>
                    <path d="M2 159h1740M2 173h1740" stroke="#a9abad" stroke-width="3"/>
                    <path d="M2 163h1740M2 170h1740" stroke="#0c0d0e" stroke-width="2"/>
                    <rect x="2" y="165" width="1740" height="4" fill="#8b8d8f"/>
                    <path d="M0 261.500h1744" stroke="#68696b" stroke-width="3"/>
                    <g fill="#c8e036" stroke="#a2b82a">
                        <rect x="1.500" y="263.500" width="8" height="326"/>
                        <rect x="1.500" y="593.500" width="8" height="298"/>
                        <rect x="9.500" y="916.500" width="44" height="39"/>
                        <rect x="9.500" y="959.500" width="44" height="138"/>
                        <rect x="9.500" y="1101.500" width="44" height="95"/>
                        <rect x="309.500" y="959.500" width="43" height="138"/>
                        <rect x="308.500" y="1101.500" width="44" height="95"/>
                    </g>
                    <path d="M0 590.500h30M0 892.500h30" stroke="#46505a" stroke-width="2"/>
                    <path d="M0 901h30" stroke="#a5a8ab" stroke-width="2"/>
                    <path d="M10 937h44M10 944h44" stroke="#a2b82a" stroke-width="3"/>
                    <text x="14" y="932" class="clipname">PR</text>
                    <text x="4" y="609" class="clipname">(</text>
                    <g fill="#7c8b1c" stroke="#2f3508">
                        <path d="M2 361l2 9 2-14 3 8v42l-2-8-2 14-3-12z"/>
                        <path d="M2 731l3 3 4-4v20l-3-3-3 5z"/>
                        <path d="M11 1014l2 10 3-9 2 10 3-12 4 9 6-7v34l-5-9-3 7-3-10-3 11-3-9-3 6z"/>
                        <path d="M11 1152l2-5 3 8 2-5 3 6 3-8 3 6 3-5 3 7 3-4 3 5 4-4 3 3 3-2 3 4v12l-3-2-3 4-3-5-4 4-3-5-3 5-3-6-3 9-3-8-3 7-3-7-3 6-2 5-3-4z"/>
                        <path d="M310 1152l2-5 3 8 2-5 3 6 3-8 3 6 3-5 3 7 3-4 3 5 4-4 3 3 3-2 2 4v12l-2-2-3 4-3-5-4 4-3-5-3 5-3-6-3 9-3-8-3 7-3-7-3 6-2 5-3-4z"/>
                    </g>
                </svg>
                <div class="vscroll"><i>⌄</i><span class="tri"></span><span>-</span><div class="vslide"></div><span>+</span></div>
                <div class="hscroll"><button aria-label="Scroll left">‹</button><div class="thumb"></div><button class="end" aria-label="Scroll right">›</button></div>
                <div class="hzoom"><span class="tri"></span><span>-</span><div class="hslide"></div><span>+</span></div>
            </div>
        </section>

        <aside class="rightzone">
            <div class="rtabs"><button>Media</button><button>CR</button><button>Meter</button></div>
            <div class="rack">
                <div class="rack-tools">
                    <div class="group small"><button aria-label="Search"><svg><use href="#search"/></svg></button></div>
                    <div class="group small arrows"><button aria-label="Previous"><svg><use href="#up"/></svg></button><button aria-label="Next"><svg><use href="#down"/></svg></button></div>
                    <div class="group small"><button class="on" aria-label="Show panel"><svg><use href="#eject"/></svg></button></div>
                    <div class="group small"><button class="cog" aria-label="Rack setup"><svg><use href="#gear"/></svg></button></div>
                </div>
                <div class="module">
                    <div class="front">
                        <div class="screen">
                            <div class="prog"><svg><use href="#edit"/></svg><svg><use href="#snow"/></svg><b>SprrDrmm3</b><i class="tri"></i></div>
                            <div class="prog page"><b>Page 1</b></div>
                            <div class="params"><span>Param<br>1</span><span>Param<br>2</span><span>Param<br>3</span><span>Param<br>4</span></div>
                        </div>
                        <div class="knobs"><svg><use href="#knob"/></svg><svg><use href="#knob"/></svg><svg><use href="#knob"/></svg><svg><use href="#knob"/></svg></div>
                    </div>
                    <div class="strip"><svg><use href="#eject"/></svg><svg><use href="#quick"/></svg></div>
                </div>
                <div class="rack-head"><b>Track</b><b>Rack</b><i class="tri"></i></div>
            </div>
        </aside>
    </main>

    <footer class="bottombar">
        <div class="bleft">
            <div class="group"><button aria-label="Time format"><svg><use href="#tclock"/></svg></button></div>
            <div class="group dark pair"><button aria-label="Record mode"><svg><use href="#dot"/></svg></button><button class="arrow slim" aria-label="Record options"></button></div><i class="grip"></i>
            <div class="group dark pair"><button aria-label="Audio mode"><svg><use href="#wave"/></svg></button><button class="arrow slim" aria-label="Audio options"></button></div><i class="grip"></i>
            <div class="group dark pair"><button aria-label="MIDI mode"><svg><use href="#din"/></svg></button><button class="arrow slim" aria-label="MIDI options"></button></div><i class="grip"></i>
            <div class="group"><button class="aq">AQ</button></div>
        </div>
        <button class="xclose">x</button>
        <div class="bcenter">
            <div class="group"><button class="aq">AQ</button></div>
            <label class="readout grey"><svg><use href="#locL"/></svg><input type="text" aria-label="Left locator" value="1.   4.   1.    0"></label>
            <label class="readout grey gap-s"><svg><use href="#locR"/></svg><input type="text" aria-label="Right locator" value="276.   1.   1.    0"></label>
            <div class="group"><button class="on" aria-label="Lock punch"><svg><use href="#lock"/></svg></button><button aria-label="Punch in"><svg><use href="#pin"/></svg></button><button aria-label="Punch out"><svg><use href="#pout"/></svg></button></div>
            <i class="grip"></i>
            <div class="transport">
                <button class="cyc" aria-label="Cycle"><svg><use href="#cycle"/></svg></button><button class="stp" aria-label="Stop"><svg><use href="#stop"/></svg></button><button aria-label="Play"><svg><use href="#play"/></svg></button><button aria-label="Record"><svg><use href="#rec"/></svg></button>
            </div>
            <i class="grip"></i>
            <label class="readout"><svg><use href="#note"/></svg><input type="text" aria-label="Position" value="124.   3.   4.  37"></label>
            <label class="readout gap-s"><svg><use href="#clock"/></svg><input type="text" aria-label="Position time" value="0:03:17.931"></label>
            <i class="grip"></i>
            <div class="group dark"><button class="on" aria-label="Tempo track"><svg><use href="#tempo"/></svg></button><input class="bpm" type="text" aria-label="Tempo" value="150.000"><svg class="spin"><use href="#updown"/></svg></div>
            <i class="grip"></i>
            <div class="group"><button aria-label="Metronome"><svg><use href="#click"/></svg></button><button aria-label="Click setup"><svg><use href="#edit"/></svg></button></div>
            <i class="grip"></i>
            <div class="meter"></div>
            <i class="grip"></i>
            <div class="group dark"><button class="cog" aria-label="Transport setup"><svg><use href="#gear"/></svg></button></div>
        </div>
        <button class="xclose">x</button>
        <div class="bright">
            <div class="group"><button aria-label="Metronome"><svg><use href="#click"/></svg></button><button aria-label="Click setup"><svg><use href="#edit"/></svg></button></div>
            <i class="grip"></i>
            <div class="meter"></div>
            <i class="grip"></i>
            <div class="group dark"><button class="cog" aria-label="Bar setup"><svg><use href="#gear"/></svg></button></div>
        </div>
    </footer>

    <!-- plug-in window floating over the project -->
    <div class="plugin">
        <div class="plug-title"><span>MASTER Bus: Ins. 8 - AnalogGearSettingRecall</span><button aria-label="Close plug-in">×</button></div>
        <div class="plug-tools">
            <div class="group small"><button class="on" aria-label="Activate"><svg><use href="#powerOn"/></svg></button><button aria-label="Bypass"><svg><use href="#bypass"/></svg></button></div>
            <div class="group small letters"><button>R</button><button>W</button></div>
            <div class="group small"><button aria-label="A/B"><svg><use href="#a"/></svg></button><button aria-label="Copy"><svg><use href="#left"/></svg></button></div>
            <div class="group small presetbox"><input type="text" aria-label="Preset"><button aria-label="Previous preset"><svg><use href="#stepUp"/></svg></button><button aria-label="Next preset"><svg><use href="#stepDown"/></svg></button><button class="arrow blk" aria-label="Preset options"></button></div>
            <div class="group small push"><button aria-label="Snapshot"><svg class="cam"><use href="#camera"/></svg></button></div>
            <div class="group small"><button class="arrow blk" aria-label="Snapshots"></button></div>
            <div class="group small qc"><button>QC</button><button aria-label="Lock"><svg><use href="#unlock"/></svg></button><button class="blue" aria-label="Colour"></button></div>
        </div>
        <div class="plug-main">
            <div class="col makers">
                <h2>Manufacturer</h2>
                <ul>
                    <li>AMS Neve</li>
                    <li>API</li>
                    <li>Bettermaker</li>
                    <li class="has">Blackstar</li>
                    <li>Bricasti Design</li>
                    <li class="has">Chandler Limited</li>
                    <li>Cranbourne Camden</li>
                    <li>Dangerous Music</li>
                    <li class="has">Dbx</li>
                    <li>Drawmer</li>
                    <li>Elysia</li>
                    <li class="has">Empirical Labs</li>
                    <li>Eventide</li>
                    <li class="current">Generic</li>
                    <li>Golden Age</li>
                    <li class="has">Heritage Audio</li>
                    <li>IGS Audio</li>
                    <li class="has">Kush Audio</li>
                    <li class="has">Maag Audio</li>
                    <li>Manley Labs</li>
                    <li class="has">Peavey</li>
                    <li class="has">Pultec</li>
                    <li>Purple Audio</li>
                    <li>Retro Instruments</li>
                    <li class="has">Rupert Neve</li>
                    <li>Shadow Hills</li>
                    <li class="has">Smart Research</li>
                    <li class="has">Solid State Logic</li>
                    <li>SPL</li>
                    <li class="has">Stam Audio</li>
                    <li>Tegeler Audio</li>
                    <li>Thermionic Culture</li>
                    <li class="has">TK Audio</li>
                    <li>Tube-Tech</li>
                    <li>Universal Audio</li>
                    <li>Vertigo Sound</li>
                    <li class="has">Warm Audio</li>
                </ul>
            </div>
            <div class="col hardware">
                <h2>Hardware</h2>
                <ul>
                    <li>500 Serie Rack</li>
                    <li>Generic 1176</li>
                    <li>Generic EQP</li>
                    <li>Generic LA-2A</li>
                    <li>Generic LA-3A</li>
                </ul>
            </div>
            <div class="sheet"></div>
            <div class="plug-scroll"></div>
        </div>
        <div class="plug-foot">
            <button class="add" aria-label="Add"><svg><use href="#plus"/></svg></button>
            <button class="notes">Notes</button>
            <em>version 0.1b (2022-09-27)</em>
        </div>
    </div>
</body>

</html>
```
FILE: styles.css
```css
* {
    box-sizing: border-box;
}

body {
    margin: 0;
    height: 100vh;
    display: flex;
    flex-direction: column;
    overflow: hidden;
    position: relative;
    background: #060606;
    color: #e6e6e6;
    font-family: "Open Sans", "Noto Sans", sans-serif;
    font-size: 12px;
}

b {
    font-weight: 600;
}

button,
input,
select {
    font: inherit;
    color: inherit;
    background: none;
    border: 0;
    margin: 0;
    padding: 0;
    border-radius: 0;
}

button {
    display: inline-flex;
    align-items: center;
    justify-content: center;
}

svg {
    width: 15px;
    height: 15px;
    flex: none;
}

.sprite {
    position: absolute;
    width: 0;
    height: 0;
}

ul {
    list-style: none;
    margin: 0;
    padding: 0;
}

.tri,
.arrow::after,
.drop::after,
.fold::after {
    content: "";
    width: 9px;
    height: 8px;
    background: currentColor;
    clip-path: polygon(0 0, 100% 0, 50% 100%);
}

/* window bars */
.menubar,
.titlebar {
    flex: none;
    display: flex;
    align-items: center;
    height: 30px;
    background: #fff;
    color: #222;
    border-bottom: 2px solid #a9a9a9;
}

.menubar {
    padding-left: 5px;
}

.titlebar {
    height: 29px;
    border-bottom-width: 1px;
}

.logo {
    width: 22px;
    height: 22px;
}

.menu {
    display: flex;
    gap: 13px;
    padding-left: 12px;
}

.menu a {
    color: inherit;
    text-decoration: none;
}

.app-title,
.doc-title {
    flex: 1;
    text-align: center;
    padding-left: 116px;
}

.doc-title {
    padding-left: 104px;
}

.win-buttons {
    display: flex;
    width: 204px;
    padding-left: 14px;
}

.win-buttons button {
    width: 47px;
}

.win-buttons button:first-child {
    width: 16px;
    margin-right: 24px;
}

.inactive {
    width: 204px;
    color: #aaa;
}

.inactive button:first-child {
    margin-right: 34px;
}

/* toolbar groups */
.toolbar,
.infobar {
    flex: none;
    display: flex;
    align-items: center;
    background: #25282c;
    padding: 0 5px 0 10px;
}

.toolbar {
    height: 39px;
    gap: 5px;
}

.toolbar svg,
.bottombar svg {
    width: 17px;
    height: 17px;
}

.group {
    display: flex;
    align-items: center;
    flex: none;
    height: 26px;
    outline: 1px solid #66696d;
    outline-offset: -1px;
    border-radius: 3px;
    background: #55575b;
    overflow: hidden;
}

.group button {
    width: 25px;
    height: 100%;
}

.group.dark {
    background: #1b1d20;
}

.group .on {
    background: #f4f4f4;
    color: #111;
}

.group .grey {
    background: #55575b;
}

.group .slim {
    width: 14px;
}

.group .cog {
    width: 19px;
}

.gap-config {
    margin-left: 83px;
}

.gap-s {
    margin-left: 5px;
}

.push {
    margin-left: auto;
}

.drop {
    display: flex;
    align-items: center;
    height: 100%;
    background: #1b1d20;
    padding: 0 7px 0 5px;
}

.drop select {
    appearance: none;
    flex: 1;
    min-width: 0;
    font-size: 13px;
}

.w-config {
    width: 125px;
    border-right: 1px solid #62656a;
}

.w-touch {
    width: 99px;
}

.w-grid {
    width: 113px;
}

.w-quant {
    width: 126px;
}

.lead {
    margin: 0 0 0 5px;
}

.lead + .drop {
    width: 117px;
}

.letters button {
    font: bold 14px "Noto Sans", sans-serif;
}

.letters .mute {
    background: #e3d32f;
    color: #222;
}

.letters .dim {
    color: #85878a;
}

.transport {
    display: flex;
    flex: none;
    height: 32px;
    width: 200px;
    border: 2px solid #c5c5c5;
    border-radius: 3px;
    background: #707070;
    overflow: hidden;
}

.transport button {
    flex: 1;
}

.transport .cyc {
    background: #8572e4;
    color: #111;
}

.transport .stp {
    background: #e4eaf4;
    color: #111;
}

.grip {
    flex: none;
    width: 3px;
    height: 16px;
    margin: 0 -1px;
    background: repeating-linear-gradient(#aaa 0 2px, transparent 2px 4px);
}

.readout {
    display: flex;
    align-items: center;
    flex: none;
    width: 150px;
    height: 26px;
    background: #1b1d20;
    border: 1px solid #62656a;
    border-radius: 3px;
    overflow: hidden;
}

.toolbar .readout svg,
.bottombar .readout svg {
    width: 25px;
    height: 100%;
    padding: 4px;
    border-right: 1px solid #62656a;
}

.readout.grey svg {
    background: #55575b;
}

.readout input {
    flex: 1;
    min-width: 0;
    padding-right: 6px;
    text-align: right;
    font: 14px "Noto Sans", sans-serif;
}

.infobar {
    height: 30px;
    gap: 6px;
    padding-bottom: 9px;
    justify-content: center;
}

.infobar .group {
    height: 20px;
    margin-left: auto;
}

.infobar .chip:first-child {
    margin-left: auto;
}

.chip {
    background: #43464a;
    border-radius: 2px;
    padding: 0 8px;
    line-height: 20px;
    font-size: 10px;
    white-space: nowrap;
    color: #ddd;
}

.chip b {
    padding-left: 16px;
    color: #fff;
}

.statusline {
    flex: none;
    height: 41px;
    line-height: 42px;
    text-align: center;
    font-size: 11px;
    font-weight: 600;
    padding-left: 8px;
    background: #191a1c;
    color: #c4c4c4;
}

/* workspace */
.workspace {
    flex: 1;
    min-height: 0;
    display: flex;
    gap: 6px;
    padding: 4px 6px 3px;
}

.inspector {
    flex: none;
    width: 172px;
    display: flex;
    flex-direction: column;
}

.tabs {
    flex: none;
    display: flex;
    height: 23px;
}

.tab {
    font-weight: 600;
    padding: 0;
    width: 78px;
    height: 23px;
    white-space: nowrap;
}

.tab.active {
    background: #25282b;
    border: 2px solid #4b4d50;
    border-bottom: 0;
    border-radius: 6px 6px 0 0;
    height: 25px;
    padding-bottom: 3px;
    z-index: 1;
}

.tabs.bottom {
    height: 21px;
}

.bottom .tab {
    width: 70px;
    padding-top: 2px;
}

.bottom .tab.active {
    border-bottom: 2px solid #4b4d50;
    border-top: 0;
    border-radius: 0 0 6px 6px;
    margin-top: -2px;
    height: 23px;
    padding: 6px 0 0;
}

.burger {
    margin-left: 4px;
    font-size: 16px;
    height: 20px;
}

.insp-body {
    flex: 1;
    min-height: 0;
    border: 2px solid #4b4d50;
    border-radius: 0 6px 6px 0;
    background: #25282b;
    padding: 7px 7px 0 6px;
}

.trackname {
    display: flex;
    height: 23px;
    background: #707274;
    border: 1px solid #77797c;
    border-radius: 3px;
}

.trackname button {
    width: 23px;
}

.trackname span {
    flex: 1;
    background: #c8e036;
    color: #222;
    font-size: 11px;
    font-weight: 600;
    line-height: 21px;
    padding-left: 6px;
}

.trackname span::after {
    content: "▸";
    float: right;
    padding-right: 2px;
}

.modeblock {
    display: flex;
    height: 49px;
    margin: 7px 3px 0;
    padding: 3px;
    gap: 3px;
    background: #a9c3e0;
    color: #15181c;
    border-radius: 4px;
    font: 800 11px Inter, sans-serif;
    clip-path: polygon(0 0, 100% 0, 100% 41px, 46px 41px, 26px 49px, 10px 49px, 0 40px);
}

.modeblock svg {
    width: 13px;
    height: 13px;
}

.leftkeys {
    width: 45px;
}

.ms,
.rightkeys > div {
    display: flex;
    height: 17px;
    border: 1px solid #74879c;
    border-radius: 3px;
    background: #a5b8cc;
    overflow: hidden;
}

.rightkeys {
    flex: 1;
}

.rightkeys > div + div {
    margin-top: 2px;
}

.ms button,
.rightkeys button {
    flex: 1;
}

.rm {
    display: flex;
    align-items: flex-start;
    padding-top: 2px;
}

.rm button {
    width: 24px;
    height: 24px;
    border-radius: 50%;
    border: 1px solid #53667a;
    background: #b3bcc6;
}

.rm .small {
    width: 19px;
    height: 19px;
}

.amber {
    background: #e8a558;
}

.values {
    display: grid;
    grid-template-columns: 20px 101px;
    justify-content: end;
    justify-items: center;
    align-items: center;
    column-gap: 6px;
    margin: 3px 3px 0 0;
    color: #70869c;
}

.values svg {
    width: 15px;
    height: 9px;
}

.values svg.wide {
    width: 20px;
    height: 13px;
}

.values label {
    display: flex;
    flex-direction: column;
    width: 101px;
    height: 22px;
    background: #000;
}

.values output {
    text-align: right;
    line-height: 15px;
    font-size: 11px;
    font-weight: 600;
    color: #fff;
    height: 15px;
    padding-top: 3px;
}

.values output.mid {
    text-align: center;
    color: #566;
}

.values input {
    appearance: none;
    height: 3px;
    margin-top: 3px;
    background: #16222e;
}

.values .filled {
    background: linear-gradient(90deg, #5e97c4 78%, #16222e 78%);
}

.values input::-webkit-slider-thumb {
    appearance: none;
    width: 6px;
    height: 7px;
    background: #d8f0fb;
}

.routing {
    margin: 11px 3px 0;
}

.routing li {
    display: flex;
    align-items: center;
    gap: 7px;
    height: 17px;
    padding: 0 3px;
    background: #000;
    font-size: 11px;
    font-weight: 600;
    margin-bottom: 1px;
}

.routing svg {
    width: 10px;
    height: 10px;
    color: #5a6c74;
}

.routing span {
    flex: 1;
}

.routing .none {
    color: #626f85;
}

.extension {
    display: flex;
    align-items: center;
    height: 21px;
    margin: 7px 3px 0;
    border: 1px solid #5b5e62;
    background: #1b1d20;
    padding-left: 4px;
}

.extension svg {
    width: 11px;
    height: 11px;
}

.extension .drop {
    flex: 1;
    padding-right: 5px;
    padding-left: 3px;
}

.extension select {
    font-size: 11px;
}

.extension .drop::after {
    width: 7px;
    height: 6px;
}

.sections {
    display: flex;
    flex-direction: column;
    gap: 10px;
    padding-top: 23px;
}

.sections button {
    height: 23px;
    justify-content: flex-start;
    padding-left: 5px;
    border: 1px solid #6c6f72;
    border-radius: 3px;
    background: #55575b;
}

.sections button::before {
    content: "";
    width: 8px;
    height: 10px;
    margin-right: 5px;
    background: #eee;
    clip-path: polygon(0 0, 100% 50%, 0 100%);
}

.sections svg {
    width: 23px;
    height: 21px;
    padding: 3px;
    margin-left: auto;
    border-left: 1px solid #6c6f72;
}

.setup {
    width: 26px;
    height: 20px;
    margin-top: 8px;
    border: 1px solid #5b5e62;
    background: #1b1d20;
}

/* project zone */
.project {
    flex: 1;
    min-width: 0;
    display: flex;
    border: 2px solid #4b4d50;
    border-radius: 7px;
    background: #25282b;
    overflow: hidden;
}

.tracklist {
    flex: none;
    width: 371px;
    padding-left: 3px;
    display: flex;
    flex-direction: column;
}

.list-tools {
    flex: none;
    display: flex;
    gap: 10px;
    height: 30px;
    padding: 4px 3px 0 0;
}

.group.small {
    height: 21px;
}

.group.count {
    margin-left: auto;
    background: #1b1d20;
}

.count span {
    background: #303337;
    line-height: 21px;
    padding: 0 10px 0 4px;
    font-size: 11px;
}

.pinned {
    height: 230px;
    flex: none;
}

.ptrack {
    display: flex;
    border-bottom: 1px solid #77797c;
    margin-right: 1px;
}

.row-a {
    height: 42px;
}

.row-b {
    height: 22px;
}

.pside {
    width: 40px;
    flex: none;
    display: flex;
    gap: 8px;
    background: #8f9092;
    color: #fff;
    padding: 3px 2px;
}

.pside svg {
    width: 18px;
    height: 16px;
}

.pside small,
.colour small {
    font-size: 10px;
    color: #444;
}

.pbody {
    flex: 1;
    display: flex;
    align-items: flex-start;
    gap: 5px;
    padding: 3px 0 0 6px;
    background: #48494d;
    border-right: 11px solid #000;
    font-size: 12px;
    color: #fff;
    min-width: 0;
    overflow: hidden;
}

.pbody b {
    line-height: 18px;
    font-weight: bold;
}

.pbody b.wide {
    width: 121px;
}

.keys {
    display: flex;
    flex: none;
    color: #111;
}

.keys button,
.keys i {
    width: 22px;
    height: 17px;
    font: 800 11px Inter, sans-serif;
}

.keys button {
    border: 1px solid #2c2e30;
    background: #6a6c6f;
}

.keys svg {
    width: 15px;
    height: 13px;
}

.keys .orange {
    background: #f08a54;
}

.keys .yellow {
    background: #e2ca4c;
}

.mbtns {
    display: flex;
    gap: 4px;
}

.mbtns button,
.dk {
    height: 17px;
    width: 47px;
    padding: 0 4px;
    justify-content: flex-start;
    border: 1px solid #37393b;
    border-radius: 2px;
    background: #66686b;
    color: #111;
    font-size: 11px;
    font-weight: 600;
}

.mbtns .num {
    width: 52px;
    justify-content: flex-end;
}

.mbtns .ic {
    width: 23px;
    padding: 0 3px;
}

.mbtns .step {
    width: 55px;
    justify-content: flex-end;
}

.dk {
    width: 22px;
}

.splitter {
    flex: none;
    height: 3px;
    background: repeating-linear-gradient(90deg, #e0e0e0 0 4px, #68696b 4px 6px) center / 24px 100% no-repeat #68696b;
}

.track {
    flex: none;
    display: flex;
    padding: 0 12px 0 23px;
    background: #050505;
    border-bottom: 1px solid #77797c;
    overflow: hidden;
}

.h1 { height: 328px; }
.h2 { height: 302px; }
.h3 { height: 142px; }
.bus { height: 22px; }
.folder { height: 42px; }

.last {
    flex: 1;
    min-height: 0;
    border-bottom: 0;
}

.colour {
    flex: none;
    width: 41px;
    background: #c8e036;
    display: flex;
    gap: 6px;
    padding: 3px 2px;
    color: #fff;
}

.colour svg {
    width: 18px;
    height: 15px;
}

.tbody {
    flex: 1;
    min-width: 0;
    padding: 3px 0 0 6px;
    background: #58602e;
    color: #111;
}

.selected .tbody {
    background: #e8e8e8;
    padding-top: 4px;
}

.bus .colour {
    background: #2d2e30;
}

.bus .tbody {
    background: #2b2c2f;
}

.folder {
    padding-left: 12px;
}

.folder .colour {
    width: 52px;
    background: #929395;
}

.folder .tbody {
    background: #484a50;
}

.thead {
    display: flex;
    gap: 5px;
}

.thead b {
    color: #fff;
    line-height: 17px;
}

.track .keys button,
.tctl span,
.gain {
    background: rgba(255, 255, 255, 0.22);
    border: 1px solid rgba(0, 0, 0, 0.65);
}

.gain {
    width: 48px;
    height: 16px;
    margin: 0 14px 0 auto;
    font-size: 10px;
    font-weight: 600;
}

.tctl {
    display: flex;
    gap: 2px;
    padding: 3px 0 0 47px;
}

.tctl span {
    display: flex;
    height: 17px;
    border-radius: 2px;
}

.tctl button {
    width: 23px;
    font: 800 11px Inter, sans-serif;
}

.tctl svg {
    width: 16px;
    height: 13px;
}

.pic {
    width: 130px;
    height: 130px;
    margin: 3px 0 0 7px;
    border: 1px solid rgba(0, 0, 0, 0.3);
    border-radius: 2px;
}

.low {
    margin-top: 61px;
}

.mini {
    width: 63px;
    height: 63px;
    margin: 30px 0 0;
}

.cut {
    width: 54px;
    height: 54px;
    margin: 21px 0 0;
}

.list-foot {
    flex: none;
    height: 18px;
    display: flex;
    align-items: center;
    gap: 10px;
    padding: 0 5px;
    color: #85878a;
}

.list-foot span {
    flex: 1;
}

/* arrangement */
.arrange {
    flex: 1;
    min-width: 0;
    display: grid;
    grid-template-columns: minmax(0, 1fr) 14px;
    grid-template-rows: minmax(0, 1fr) 12px;
    padding-bottom: 3px;
    border-left: 3px solid #68696b;
}

.canvas {
    width: 100%;
    height: 100%;
}

.ruler,
.clipname,
.tag {
    font-size: 11px;
    font-weight: bold;
    fill: #e8e8ff;
}

.clipname {
    fill: #222;
}

.tag {
    fill: #333;
    font-weight: normal;
}

.vscroll {
    display: flex;
    flex-direction: column;
    align-items: center;
    justify-content: flex-end;
    color: #aaa;
    line-height: 12px;
}

.vscroll i {
    flex: 1;
    width: 12px;
    margin-bottom: 5px;
    display: flex;
    align-items: flex-end;
    justify-content: center;
    background: #444648;
    font-style: normal;
    color: #eee;
    padding-bottom: 6px;
}

.vscroll .tri,
.hzoom .tri {
    width: 7px;
    height: 5px;
}

.vslide,
.hslide {
    width: 1px;
    height: 58px;
    background: #888;
    position: relative;
}

.vslide::after,
.hslide::after {
    content: "";
    position: absolute;
    left: -3px;
    top: 9px;
    width: 7px;
    height: 7px;
    border-radius: 50%;
    background: #bbb;
}

.hscroll {
    grid-row: 2;
    grid-column: 1;
    display: flex;
    align-items: center;
    background: #444648;
    margin-right: 109px;
}

.hscroll button {
    width: 12px;
    height: 12px;
    font-size: 14px;
    line-height: 12px;
    padding-bottom: 2px;
}

.hscroll .thumb {
    width: 292px;
    height: 9px;
    margin-left: 51px;
    border-radius: 3px;
    background: #f2f2f2;
}

.hscroll .end {
    margin-left: auto;
}

.hzoom {
    grid-row: 2;
    grid-column: 1;
    justify-self: end;
    width: 100px;
    display: flex;
    align-items: center;
    gap: 8px;
    color: #aaa;
    line-height: 12px;
}

.hslide {
    width: 45px;
    height: 1px;
}

.hslide::after {
    left: 10px;
    top: -3px;
}

/* right zone */
.rightzone {
    flex: none;
    width: 228px;
    display: flex;
    flex-direction: column;
}

.rtabs {
    display: flex;
    justify-content: flex-end;
    gap: 30px;
    height: 22px;
    padding-right: 13px;
    font-weight: 600;
    color: #d4d4d4;
}

.rack {
    flex: 1;
    border: 2px solid #4b4d50;
    border-radius: 0 7px 7px 7px;
    background: #25282b;
    padding: 8px 7px 0 4px;
}

.rack-tools {
    display: flex;
    justify-content: flex-end;
    gap: 2px;
}

.rack-tools .group {
    background: #333639;
    height: 20px;
}

.rack-tools .arrows {
    margin-left: 35px;
}

.module {
    display: flex;
    height: 154px;
    margin-top: 8px;
    border: 2px solid #a8a8a8;
    border-radius: 3px;
    background: #606163;
}

.front {
    flex: 1;
}

.screen {
    height: 90px;
    margin: 4px 6px 0 0;
    padding: 15px 6px 0 0;
    background: #454545;
    border: 2px solid #2a2a2a;
    border-radius: 4px;
    color: #d8d8d8;
}

.prog {
    display: flex;
    justify-content: flex-end;
    align-items: center;
    gap: 6px;
    height: 18px;
    font-size: 11px;
    padding-right: 4px;
}

.prog svg {
    width: 11px;
    height: 11px;
    color: #888;
}

.prog b {
    padding-left: 12px;
}

.prog .tri {
    margin-left: 6px;
    color: #888;
    height: 5px;
}

.page {
    padding-right: 49px;
}

.params,
.knobs {
    display: grid;
    grid-template-columns: repeat(4, 36px);
    justify-content: end;
    justify-items: center;
    text-align: center;
    font-size: 9px;
    line-height: 16px;
    color: #aaa;
}

.knobs {
    padding: 17px 12px 0 0;
}

.knobs svg {
    width: 26px;
    height: 26px;
}

.strip {
    width: 20px;
    border-left: 1px solid #222;
    display: flex;
    flex-direction: column;
    justify-content: space-between;
    align-items: center;
    padding: 4px 0;
    color: #d0d0d0;
    --hole: #555;
}

.strip svg {
    width: 11px;
    height: 11px;
}

.rack-head {
    display: flex;
    align-items: center;
    justify-content: flex-end;
    height: 23px;
    padding-right: 31px;
    border-bottom: 1px solid #c4cbe0;
    color: #d8dce8;
}

.rack-head b + b {
    margin: 0 8px 0 53px;
}

/* bottom transport */
.bottombar {
    flex: none;
    display: flex;
    height: 45px;
}

.bleft,
.bright,
.bcenter {
    display: flex;
    align-items: center;
    gap: 5px;
    background: #25282b;
    margin: 1px 0 4px;
    padding: 0 5px;
}

.bleft {
    flex: 617;
}

.bright {
    flex: 617;
    justify-content: flex-end;
}

.bcenter {
    flex: none;
    border: 2px solid #4b4d50;
    border-bottom: 0;
    border-radius: 7px 7px 0 0;
    margin: 0;
    padding: 0 5px 0 4px;
}

.pair button:first-child {
    width: 30px;
}

.group .aq {
    width: 38px;
    font-size: 14px;
}

.xclose {
    width: 19px;
    height: 16px;
    font-weight: bold;
    line-height: 16px;
    padding-bottom: 3px;
}

.bpm {
    width: 62px;
    text-align: right;
}

.bottombar .spin {
    width: 20px;
    height: 15px;
}

.meter {
    width: 90px;
    height: 26px;
    border: 1px solid #62656a;
    border-radius: 3px;
    background: linear-gradient(#2aa0b0, #2aa0b0) 3px 21px / 8px 2px no-repeat, linear-gradient(#555, #555) 25px 0 / 1px 100% no-repeat #1b1d20;
}

/* plug-in window */
.plugin {
    position: absolute;
    left: 588px;
    right: 172px;
    top: 171px;
    bottom: 207px;
    display: flex;
    flex-direction: column;
    background: #25282b;
    box-shadow: 0 3px 8px rgba(0, 0, 0, 0.6);
    z-index: 2;
}

.plug-title {
    flex: none;
    display: flex;
    align-items: flex-end;
    justify-content: space-between;
    height: 29px;
    padding-left: 7px;
    background: #fff;
    color: #222;
}

.plug-title span {
    line-height: 27px;
}

.plug-title button {
    width: 21px;
    height: 20px;
    margin-bottom: 2px;
    background: #c75050;
    color: #fff;
    font-weight: bold;
}

.plug-tools {
    flex: none;
    display: flex;
    align-items: center;
    gap: 4px;
    height: 29px;
    padding: 0 5px 0 4px;
}

.plug-tools .small {
    height: 19px;
}

.plug-tools svg {
    width: 13px;
    height: 13px;
}

.plug-tools .cam {
    width: 17px;
}

.plug-tools .blk {
    background: #1b1d20;
}

.plug-tools .blk::after {
    width: 7px;
    height: 7px;
}

.plug-tools .qc {
    margin-left: 4px;
}

.qc button {
    width: 25px;
    font-weight: 600;
}

.qc button + button {
    width: 18px;
}

.qc .blue {
    height: 15px;
    background: #2a9ac8;
}

.qc button.blue {
    width: 15px;
    margin: 0 2px 0 1px;
}

.presetbox input {
    width: 96px;
    height: 100%;
    background: #222;
}

.presetbox button {
    width: 19px;
}

.plug-main {
    flex: 1;
    min-height: 0;
    display: flex;
    background: #ffa500;
    font: 12px "DejaVu Sans", sans-serif;
}

.col {
    flex: none;
    width: 204px;
    background: #808080;
    color: #929292;
}

.col h2 {
    margin: 0;
    height: 28px;
    line-height: 28px;
    padding-left: 4px;
    font-size: 12px;
    background: #cbcbcb;
    border-bottom: 1px solid #777;
    color: #000;
}

.col li {
    height: 22px;
    line-height: 22px;
    padding-left: 2px;
}

.col .has {
    background: #959595;
    color: #fff;
}

.col .current {
    background: #000;
    color: #fff;
}

.hardware {
    width: 206px;
    background: #d3d3d3;
    color: #222;
}

.hardware h2 {
    background: #ebebeb;
    padding-left: 5px;
}

.hardware li {
    padding-left: 3px;
}

.sheet {
    flex: 1;
}

.plug-scroll {
    width: 9px;
    border-radius: 4px;
    background: #fff;
}

.plug-foot {
    flex: none;
    display: flex;
    align-items: center;
    height: 30px;
    background: #000;
    color: #eee;
    font-family: "DejaVu Sans", sans-serif;
}

.add {
    width: 28px;
    height: 28px;
    border: 2px solid #fff;
    border-radius: 50%;
    margin-left: 1px;
}

.add svg {
    width: 19px;
    height: 19px;
}

.notes {
    width: 100px;
    height: 30px;
    margin-left: 71px;
    border: 1px solid #67787c;
    border-radius: 6px;
    background: #263337;
}

.plug-foot em {
    flex: 1;
    text-align: center;
    font-size: 10px;
    padding-right: 256px;
}
```
